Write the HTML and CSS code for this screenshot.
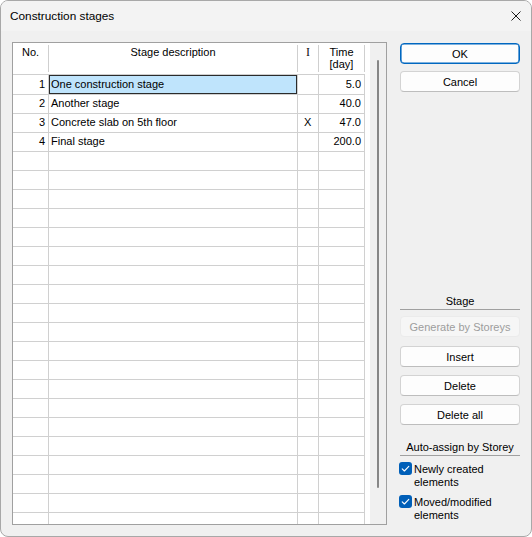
FILE: index.html
```html
<!DOCTYPE html>
<html>
<head>
<meta charset="utf-8">
<title>Construction stages</title>
<link rel="stylesheet" href="styles.css">
</head>
<body>
<div class="window">
  <div class="titlebar">
    <span class="title">Construction stages</span>
    <svg class="close" width="10" height="10" viewBox="0 0 10 10"><path d="M0.5 0.5L9.5 9.5M9.5 0.5L0.5 9.5" stroke="#1b1b1b" stroke-width="1" fill="none"/></svg>
  </div>
  <div class="content">
    <div class="grid">
      <div class="table-wrap">
        <table class="stages">
          <colgroup><col class="c-no"><col class="c-desc"><col class="c-i"><col class="c-time"></colgroup>
          <thead>
            <tr>
              <th><div class="h">No.</div></th>
              <th><div class="h">Stage description</div></th>
              <th><div class="h serif">I</div></th>
              <th><div class="h">Time<br>[day]</div></th>
            </tr>
          </thead>
          <tbody>
            <tr><td class="no">1</td><td class="desc selected">One construction stage</td><td class="ind"></td><td class="time">5.0</td></tr>
            <tr><td class="no">2</td><td class="desc">Another stage</td><td class="ind"></td><td class="time">40.0</td></tr>
            <tr><td class="no">3</td><td class="desc">Concrete slab on 5th floor</td><td class="ind">X</td><td class="time">47.0</td></tr>
            <tr><td class="no">4</td><td class="desc">Final stage</td><td class="ind"></td><td class="time">200.0</td></tr>
            <tr><td></td><td></td><td></td><td></td></tr>
            <tr><td></td><td></td><td></td><td></td></tr>
            <tr><td></td><td></td><td></td><td></td></tr>
            <tr><td></td><td></td><td></td><td></td></tr>
            <tr><td></td><td></td><td></td><td></td></tr>
            <tr><td></td><td></td><td></td><td></td></tr>
            <tr><td></td><td></td><td></td><td></td></tr>
            <tr><td></td><td></td><td></td><td></td></tr>
            <tr><td></td><td></td><td></td><td></td></tr>
            <tr><td></td><td></td><td></td><td></td></tr>
            <tr><td></td><td></td><td></td><td></td></tr>
            <tr><td></td><td></td><td></td><td></td></tr>
            <tr><td></td><td></td><td></td><td></td></tr>
            <tr><td></td><td></td><td></td><td></td></tr>
            <tr><td></td><td></td><td></td><td></td></tr>
            <tr><td></td><td></td><td></td><td></td></tr>
            <tr><td></td><td></td><td></td><td></td></tr>
            <tr><td></td><td></td><td></td><td></td></tr>
            <tr><td></td><td></td><td></td><td></td></tr>
            <tr><td></td><td></td><td></td><td></td></tr>
          </tbody>
        </table>
      </div>
      <div class="vscroll"><div class="thumb"></div></div>
    </div>
    <div class="side">
      <button class="btn default ok">OK</button>
      <button class="btn cancel">Cancel</button>
      <div class="lower">
        <div class="group-label">Stage</div>
        <button class="btn disabled gen" disabled>Generate by Storeys</button>
        <button class="btn insert">Insert</button>
        <button class="btn del">Delete</button>
        <button class="btn del">Delete all</button>
        <div class="group-label auto">Auto-assign by Storey</div>
        <div class="check first-check">
          <span class="box"><svg width="13" height="13" viewBox="0 0 13 13"><path d="M3.2 6.8L5.4 9L9.8 4.4" stroke="#fff" stroke-width="1.1" fill="none" stroke-linecap="round" stroke-linejoin="round"/></svg></span>
          <span class="label">Newly created<br>elements</span>
        </div>
        <div class="check second-check">
          <span class="box"><svg width="13" height="13" viewBox="0 0 13 13"><path d="M3.2 6.8L5.4 9L9.8 4.4" stroke="#fff" stroke-width="1.1" fill="none" stroke-linecap="round" stroke-linejoin="round"/></svg></span>
          <span class="label">Moved/modified<br>elements</span>
        </div>
      </div>
    </div>
  </div>
</div>
</body>
</html>
```

FILE: styles.css
```css
* { box-sizing: border-box; }
html, body { margin: 0; padding: 0; background: #ffffff; }
body {
  font-family: "Liberation Sans", Arial, sans-serif;
  font-size: 11px;
  color: #000;
}
.window {
  width: 532px;
  height: 537px;
  border: 1px solid #a8a8a8;
  border-radius: 8px;
  background: #f0f0f0;
  overflow: hidden;
  display: flex;
  flex-direction: column;
}
.titlebar {
  height: 30px;
  flex: none;
  display: flex;
  align-items: center;
  justify-content: space-between;
  padding: 0 10px 0 9px;
  background: #f3f3f3;
}
.title {
  font-size: 11.8px;
  line-height: 16px;
  padding-bottom: 1px;
}
.close { display: block; }
.content {
  flex: 1;
  display: flex;
  gap: 13px;
  padding: 11px;
}
.grid {
  width: 375px;
  height: 483px;
  border: 1px solid #a0a0a0;
  display: flex;
  background: #fff;
}
.table-wrap {
  width: 357px;
  height: 481px;
  overflow: hidden;
  background: #fff;
}
.stages {
  table-layout: fixed;
  width: 352px;
  border-collapse: separate;
  border-spacing: 0;
}
.c-no { width: 36px; }
.c-desc { width: 249px; }
.c-i { width: 21px; }
.c-time { width: 46px; }
.stages th {
  padding: 2px 0;
  border-bottom: 1px solid #cfcfcf;
  font-weight: normal;
  vertical-align: top;
  text-align: center;
}
.stages th .h {
  height: 27px;
  border-right: 1px solid #cfcfcf;
  line-height: 12px;
  padding-top: 1px;
}
.stages th .h.serif {
  font-family: "Liberation Serif", "Times New Roman", serif;
  font-size: 12px;
  color: #111;
}
.stages td {
  height: 19px;
  padding: 0 0 1px 0;
  border-right: 1px solid #d0d0d0;
  border-bottom: 1px solid #d0d0d0;
  line-height: 17px;
  white-space: nowrap;
  overflow: hidden;
}
.stages tbody tr:first-child td { height: 20px; line-height: 18px; }
.stages td.no { text-align: right; padding-right: 3px; }
.stages td.desc { padding-left: 2px; }
.stages td.ind { padding-left: 6px; }
.stages td.time { text-align: right; padding-right: 3px; }
.stages td.selected {
  background: #bfe4fc;
  box-shadow: inset 0 0 0 1px #2b2b2b;
}
.vscroll {
  width: 16px;
  height: 481px;
  background: #f0f0f0;
  padding: 17px 0 0 7px;
}
.thumb {
  width: 2px;
  height: 428px;
  background: #878787;
  border-radius: 1px;
}
.side {
  width: 120px;
  display: flex;
  flex-direction: column;
  padding-bottom: 4px;
}
.btn {
  display: block;
  width: 120px;
  height: 21px;
  padding: 0;
  margin: 0;
  font-family: "Liberation Sans", Arial, sans-serif;
  font-size: 11px;
  color: #000;
  background: #fdfdfd;
  border: 1px solid #d3d3d3;
  border-bottom-color: #bdbdbd;
  border-radius: 4px;
  text-align: center;
}
.btn.ok {
  margin-top: 1px;
  border: 1px solid #0067c0;
  box-shadow: inset 0 0 0 0.6px #0067c0;
}
.btn.cancel { margin-top: 7px; }
.btn.disabled {
  background: #f6f6f6;
  border: 1px solid #ebebeb;
  color: #9d9d9d;
}
.lower {
  margin-top: auto;
  display: flex;
  flex-direction: column;
}
.group-label {
  text-align: center;
  line-height: 16px;
  border-bottom: 1px solid #a0a0a0;
}
.btn.gen { margin-top: 6px; }
.btn.insert { margin-top: 9px; }
.btn.del { margin-top: 8px; }
.group-label.auto { margin-top: 14px; }
.check {
  display: flex;
  align-items: flex-start;
  gap: 2px;
  margin-left: -1px;
}
.first-check { margin-top: 6px; }
.second-check { margin-top: 7px; }
.box {
  width: 13px;
  height: 13px;
  flex: none;
  background: #005fb8;
  border-radius: 3px;
  display: block;
}
.box svg { display: block; }
.label {
  line-height: 13px;
  padding-top: 1px;
  margin-bottom: -1px;
}
```
